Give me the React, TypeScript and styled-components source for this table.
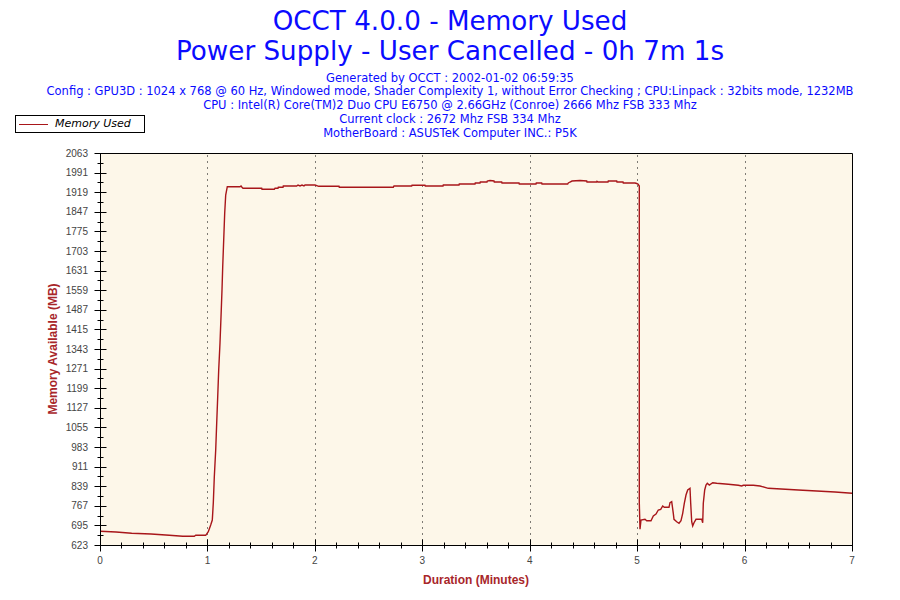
import React from 'react';
import styled, { createGlobalStyle } from 'styled-components';

const GlobalStyle = createGlobalStyle`
  html, body {
    margin: 0;
    padding: 0;
    background: #ffffff;
  }
`;

const PLOT = { left: 100, top: 153, right: 852, bottom: 545 };
const Y_MIN = 623;
const Y_STEP = 72;
const Y_STEPS = 20;
const X_MAX = 7;
const LINE_COLOR = '#a8161a';

const xAt = (m: number) => PLOT.left + (m * (PLOT.right - PLOT.left)) / X_MAX;
const yAt = (k: number) => PLOT.top + (k * (PLOT.bottom - PLOT.top)) / Y_STEPS;
const crisp = (v: number) => Math.round(v) + 0.5;

// memory curve, traced in page pixels
const CURVE: [number, number][] = [
  [100.5, 531.3], [116, 532], [131.7, 533.3], [151, 534], [169.3, 535.3], [182.7, 536.3],
  [194.3, 536.3], [195.7, 535.3], [205.7, 535.3], [208.3, 531.7], [210.7, 525], [212.3, 520],
  [213.3, 503], [214.3, 477], [215.7, 450], [216.7, 423], [217.7, 397], [218.7, 370],
  [220, 343], [221, 317], [222, 290], [222.7, 267], [223.7, 240], [224.7, 213], [225.7, 195],
  [227.3, 186.7], [240, 186.7], [241, 186], [242, 187.3], [243, 188.3], [261.7, 188.3],
  [262, 189.3], [274.3, 189.3], [275, 188.3], [278, 188.3], [278.3, 187.3], [283, 187.3],
  [283.3, 186], [296.7, 186], [298, 185], [300, 186], [302, 185], [304, 186], [305, 185],
  [315, 185], [318.7, 186.3], [339, 186.3], [339.3, 187.3], [393.3, 187.3], [394, 186],
  [411.7, 186], [412, 185.3], [425, 185.3], [425.3, 186], [443, 186], [443.3, 185],
  [459, 185], [459.3, 184], [475, 184], [475.3, 183], [480, 183], [480.3, 182], [487, 182],
  [487.3, 181], [490, 180.5], [494, 181], [494.3, 182], [501.7, 182], [502, 183], [519, 183],
  [519.3, 184], [530, 184], [536, 184], [536.3, 183], [541.7, 183], [542, 184], [567.7, 184],
  [568.3, 183], [570, 182], [572, 181], [580, 180.5], [586.7, 181], [587, 182], [596.7, 182],
  [597, 181.3], [598, 182], [608, 182], [608.3, 181], [616.7, 181], [617, 182], [623, 182],
  [623.3, 183], [635, 183], [636.7, 183.5], [638, 184], [639.3, 186], [639.3, 502.7],
  [640, 529.3], [641, 520], [645, 519.3], [646.7, 520.7], [651, 520.7], [653.3, 516],
  [656, 514], [658.3, 510], [660.7, 509.3], [662.7, 506], [664.3, 507.3], [669, 507.3],
  [670, 502.7], [671.7, 501.7], [673.3, 513.3], [674, 519.3], [676.7, 521.7], [679, 523.3],
  [681, 520.7], [682.7, 513.3], [684.3, 503.3], [686, 495], [687.7, 490], [690, 488.3],
  [690.7, 503.3], [691.7, 521.7], [692.7, 526], [694, 522.7], [696, 519.3], [701.7, 519.3],
  [702.7, 522.7], [703.3, 503.3], [704.7, 490], [706, 485], [707.3, 483.3], [709.3, 485],
  [712.7, 482.7], [716.7, 483.3], [728.3, 484.3], [738.3, 485.3], [741.7, 486], [743.3, 485.3],
  [753.3, 485.3], [760, 486], [768.3, 488.3], [798.3, 490], [816.7, 491], [835, 492],
  [852, 493.3],
];

const INFO = [
  'Generated by OCCT : 2002-01-02 06:59:35',
  'Config : GPU3D : 1024 x 768 @ 60 Hz, Windowed mode, Shader Complexity 1, without Error Checking ; CPU:Linpack : 32bits mode, 1232MB',
  'CPU : Intel(R) Core(TM)2 Duo CPU E6750 @ 2.66GHz (Conroe) 2666 Mhz FSB 333 Mhz',
  'Current clock : 2672 Mhz FSB 334 Mhz',
  'MotherBoard : ASUSTeK Computer INC.: P5K',
];

const App = () => {
  const yTicks = Array.from({ length: Y_STEPS + 1 }, (_, k) => k);
  const xMajors = Array.from({ length: X_MAX + 1 }, (_, i) => i);
  const xMinors = Array.from({ length: X_MAX * 5 }, (_, i) => i / 5).filter((m) => m % 1 !== 0);
  const L = crisp(PLOT.left);
  const R = crisp(PLOT.right);
  const T = crisp(PLOT.top);
  const B = crisp(PLOT.bottom);

  return (
    <Page>
      <GlobalStyle />
      <Header>
        <Title>
          <div>OCCT 4.0.0 - Memory Used</div>
          <div>Power Supply - User Cancelled - 0h 7m 1s</div>
        </Title>
        <Info>
          {INFO.map((line) => (
            <div key={line}>{line}</div>
          ))}
        </Info>
        <Legend>
          <LegendSwatch />
          <LegendLabel>Memory Used</LegendLabel>
        </Legend>
      </Header>

      <Chart width={900} height={460} viewBox="0 140 900 460">
        <rect x={L} y={T} width={R - L} height={B - T} fill="#fdf7e9" />

        {xMajors.slice(1, -1).map((m) => (
          <line key={`g${m}`} x1={crisp(xAt(m))} x2={crisp(xAt(m))} y1={T + 2} y2={B}
            stroke="#000" strokeWidth={1} strokeDasharray="1 5" />
        ))}

        {yTicks.map((k) => (
          <g key={`y${k}`}>
            <line x1={L - 6} x2={L + 6} y1={crisp(yAt(k))} y2={crisp(yAt(k))} stroke="#000" />
            {k < Y_STEPS && (
              <line x1={L - 3} x2={L + 3} y1={crisp(yAt(k + 0.5))} y2={crisp(yAt(k + 0.5))} stroke="#000" />
            )}
            <TickLabel x={88} y={yAt(k)} textAnchor="end" dominantBaseline="central">
              {Y_MIN + (Y_STEPS - k) * Y_STEP}
            </TickLabel>
          </g>
        ))}

        {xMajors.map((m) => (
          <g key={`x${m}`}>
            <line x1={crisp(xAt(m))} x2={crisp(xAt(m))} y1={B - 6} y2={B + 6} stroke="#000" />
            <TickLabel x={xAt(m)} y={560} textAnchor="middle" dominantBaseline="central">
              {m}
            </TickLabel>
          </g>
        ))}
        {xMinors.map((m) => (
          <line key={`xm${m}`} x1={crisp(xAt(m))} x2={crisp(xAt(m))} y1={B - 3} y2={B + 3} stroke="#000" />
        ))}

        <polyline points={CURVE.map(([x, y]) => `${x},${y}`).join(' ')} fill="none"
          stroke={LINE_COLOR} strokeWidth={1.4} strokeLinejoin="miter" />

        <path d={`M${L} ${T} H${R} V${B} H${L} Z`} fill="none" stroke="#000" strokeWidth={1} />

        <AxisTitle x={476} y={580} textAnchor="middle" dominantBaseline="central">
          Duration (Minutes)
        </AxisTitle>
        <AxisTitle x={53} y={349} textAnchor="middle" dominantBaseline="central" transform="rotate(-90 53 349)">
          Memory Available (MB)
        </AxisTitle>
      </Chart>
    </Page>
  );
};

export default App;

const Page = styled.div`
  width: 900px;
  height: 600px;
  overflow: hidden;
  background: #ffffff;
`;

const Header = styled.header`
  position: relative;
  height: 140px;
  text-align: center;
  color: #0b0bff;
  font-family: 'DejaVu Sans', Verdana, sans-serif;
`;

const Title = styled.div`
  padding-top: 6px;
  font-size: 26.2px;
  line-height: 30px;
  white-space: nowrap;
`;

const Info = styled.div`
  margin-top: 5.5px;
  font-size: 11.5px;
  line-height: 13.75px;
  white-space: nowrap;
`;

const Legend = styled.div`
  position: absolute;
  left: 15px;
  top: 115px;
  width: 125px;
  height: 16px;
  border: 1px solid #000;
  background: #fff;
  display: flex;
  align-items: center;
  gap: 7px;
  padding-left: 3px;
  box-sizing: content-box;
`;

const LegendSwatch = styled.span`
  width: 29px;
  height: 1px;
  background: ${LINE_COLOR};
`;

const LegendLabel = styled.span`
  font-family: 'DejaVu Sans', Verdana, sans-serif;
  font-style: italic;
  font-size: 11px;
  color: #000;
  line-height: 16px;
`;

const Chart = styled.svg`
  display: block;
`;

const TickLabel = styled.text`
  font-family: 'Liberation Sans', Arial, sans-serif;
  font-size: 10px;
  fill: #444;
`;

const AxisTitle = styled.text`
  font-family: 'Liberation Sans', Arial, sans-serif;
  font-size: 12px;
  font-weight: bold;
  fill: #a8262a;
`;
